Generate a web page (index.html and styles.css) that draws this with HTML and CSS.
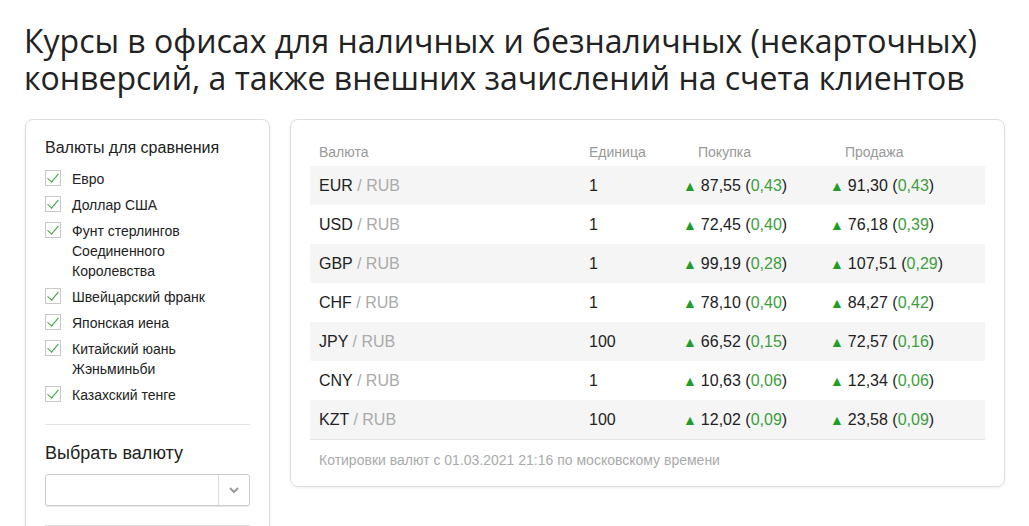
FILE: index.html
```html
<!DOCTYPE html>
<html lang="ru">
<head>
    <meta charset="UTF-8">
    <title>Курсы валют</title>
    <link rel="stylesheet" href="styles.css">
</head>
<body>
    <h1 class="title">Курсы в офисах для наличных и безналичных (некарточных) конверсий, а также внешних зачислений на счета клиентов</h1>

    <div class="layout">
        <aside class="sidebar">
            <h3 class="side-title">Валюты для сравнения</h3>
            <ul class="checks">
                <li><span class="box"></span><span>Евро</span></li>
                <li><span class="box"></span><span>Доллар США</span></li>
                <li><span class="box"></span><span>Фунт стерлингов Соединенного Королевства</span></li>
                <li><span class="box"></span><span>Швейцарский франк</span></li>
                <li><span class="box"></span><span>Японская иена</span></li>
                <li><span class="box"></span><span>Китайский юань Жэньминьби</span></li>
                <li><span class="box"></span><span>Казахский тенге</span></li>
            </ul>
            <div class="sep"></div>
            <h3 class="pick-title">Выбрать валюту</h3>
            <div class="select">
                <div class="select-value"></div>
                <div class="select-arrow">
                    <svg width="12" height="8" viewBox="0 0 12 8"><path d="M2 2 L6 6 L10 2" fill="none" stroke="#999" stroke-width="2"/></svg>
                </div>
            </div>
            <div class="sep sep-last"></div>
        </aside>

        <section class="card">
            <table class="rates">
                <colgroup>
                    <col class="c-cur">
                    <col class="c-unit">
                    <col class="c-buy">
                    <col class="c-sell">
                </colgroup>
                <thead>
                    <tr>
                        <th>Валюта</th>
                        <th>Единица</th>
                        <th class="h-rate">Покупка</th>
                        <th class="h-rate">Продажа</th>
                    </tr>
                </thead>
                <tbody>
                    <tr>
                        <td>EUR <span class="muted">/ RUB</span></td>
                        <td>1</td>
                        <td><span class="up">▲</span>87,55 (<span class="delta">0,43</span>)</td>
                        <td><span class="up">▲</span>91,30 (<span class="delta">0,43</span>)</td>
                    </tr>
                    <tr>
                        <td>USD <span class="muted">/ RUB</span></td>
                        <td>1</td>
                        <td><span class="up">▲</span>72,45 (<span class="delta">0,40</span>)</td>
                        <td><span class="up">▲</span>76,18 (<span class="delta">0,39</span>)</td>
                    </tr>
                    <tr>
                        <td>GBP <span class="muted">/ RUB</span></td>
                        <td>1</td>
                        <td><span class="up">▲</span>99,19 (<span class="delta">0,28</span>)</td>
                        <td><span class="up">▲</span>107,51 (<span class="delta">0,29</span>)</td>
                    </tr>
                    <tr>
                        <td>CHF <span class="muted">/ RUB</span></td>
                        <td>1</td>
                        <td><span class="up">▲</span>78,10 (<span class="delta">0,40</span>)</td>
                        <td><span class="up">▲</span>84,27 (<span class="delta">0,42</span>)</td>
                    </tr>
                    <tr>
                        <td>JPY <span class="muted">/ RUB</span></td>
                        <td>100</td>
                        <td><span class="up">▲</span>66,52 (<span class="delta">0,15</span>)</td>
                        <td><span class="up">▲</span>72,57 (<span class="delta">0,16</span>)</td>
                    </tr>
                    <tr>
                        <td>CNY <span class="muted">/ RUB</span></td>
                        <td>1</td>
                        <td><span class="up">▲</span>10,63 (<span class="delta">0,06</span>)</td>
                        <td><span class="up">▲</span>12,34 (<span class="delta">0,06</span>)</td>
                    </tr>
                    <tr>
                        <td>KZT <span class="muted">/ RUB</span></td>
                        <td>100</td>
                        <td><span class="up">▲</span>12,02 (<span class="delta">0,09</span>)</td>
                        <td><span class="up">▲</span>23,58 (<span class="delta">0,09</span>)</td>
                    </tr>
                </tbody>
            </table>
            <p class="note">Котировки валют с 01.03.2021 21:16 по московскому времени</p>
        </section>
    </div>
</body>
</html>
```

FILE: styles.css
```css
body {
    margin: 0;
    padding: 0 24px;
    font-family: "Liberation Sans", Arial, sans-serif;
    color: #222;
    background: #fff;
}
.title {
    font-family: "Open Sans", sans-serif;
    font-weight: 400;
    font-size: 32px;
    line-height: 37px;
    margin: 22px 0 23px 0;
    width: 980px;
    color: #222;
}
.layout {
    display: flex;
    align-items: flex-start;
    gap: 20px;
}
.sidebar {
    width: 205px;
    flex: none;
    margin-left: 1px;
    padding: 18px 19px 0 19px;
    height: 420px;
    border: 1px solid #ddd;
    border-radius: 8px;
    box-shadow: 0 1px 3px rgba(0, 0, 0, 0.08);
}
.side-title {
    font-size: 16px;
    font-weight: 400;
    margin: 0 0 11px 0;
    line-height: 20px;
}
.checks {
    list-style: none;
    margin: 0;
    padding: 0;
}
.checks li {
    display: flex;
    align-items: flex-start;
    gap: 11px;
    font-size: 14px;
    line-height: 20px;
    margin-bottom: 6px;
}
.box {
    flex: none;
    width: 14px;
    height: 14px;
    border: 1px solid #c8c8c8;
    margin-top: 1px;
    position: relative;
}
.box::after {
    content: "";
    position: absolute;
    left: 4px;
    top: 0px;
    width: 5px;
    height: 10px;
    border-right: 1.5px solid #3aa23a;
    border-bottom: 1.5px solid #3aa23a;
    transform: rotate(40deg);
}
.sep {
    border-top: 1px solid #e4e4e4;
    margin-top: 19px;
}
.pick-title {
    font-size: 18px;
    font-weight: 400;
    margin: 17px 0 10px 0;
    line-height: 22px;
}
.select {
    display: flex;
    height: 30px;
    border: 1px solid #ccc;
    border-radius: 3px;
    box-shadow: 0 1px 1px rgba(0, 0, 0, 0.1);
}
.select-value {
    flex: 1;
}
.select-arrow {
    width: 30px;
    border-left: 1px solid #ddd;
    display: flex;
    align-items: center;
    justify-content: center;
}
.sep-last {
    margin-top: 19px;
}
.card {
    width: 675px;
    flex: none;
    padding: 20px 19px 18px 19px;
    border: 1px solid #ddd;
    border-radius: 8px;
    box-shadow: 0 1px 3px rgba(0, 0, 0, 0.08);
}
.rates {
    width: 675px;
    table-layout: fixed;
    border-collapse: collapse;
    font-size: 16px;
}
.c-cur { width: 270px; }
.c-unit { width: 94px; }
.c-buy { width: 147px; }
.c-sell { width: 164px; }
.rates th {
    text-align: left;
    font-weight: 400;
    font-size: 14px;
    color: #999;
    padding: 4px 9px 6px 9px;
    line-height: 16px;
}
.rates th.h-rate {
    padding-left: 24px;
}
.rates td {
    padding: 0 9px;
    height: 39px;
    line-height: 20px;
    white-space: nowrap;
}
.rates tbody tr:nth-child(odd) {
    background: #f5f5f5;
}
.rates tbody tr:last-child td {
    border-bottom: 1px solid #e4e4e4;
}
.muted {
    color: #aaa;
}
.up {
    color: #1f9d28;
    font-size: 14px;
    margin-right: 4px;
}
.delta {
    color: #3c9e3c;
}
.note {
    margin: 12px 0 0 9px;
    font-size: 14px;
    color: #aaa;
}
```
